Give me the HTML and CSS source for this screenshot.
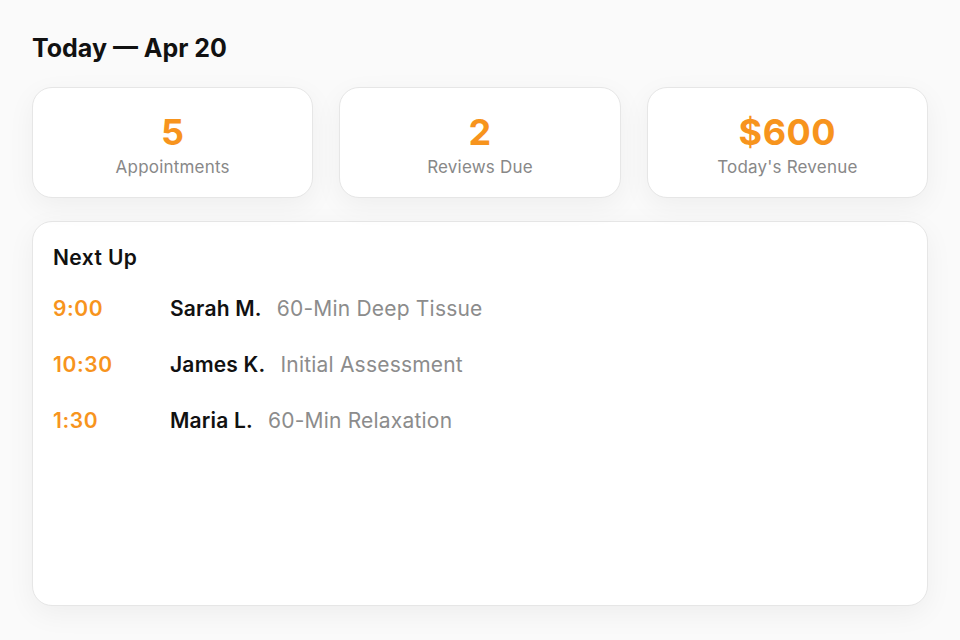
FILE: index.html
```html
<!DOCTYPE html>
<html>
<head>
<meta charset="utf-8">
<link rel="stylesheet" href="styles.css">
</head>
<body>
<main class="page">
  <h1 class="title">Today — Apr 20</h1>
  <section class="stats">
    <div class="card">
      <div class="num">5</div>
      <div class="label">Appointments</div>
    </div>
    <div class="card">
      <div class="num">2</div>
      <div class="label">Reviews Due</div>
    </div>
    <div class="card">
      <div class="num">$600</div>
      <div class="label">Today's Revenue</div>
    </div>
  </section>
  <section class="panel">
    <h2 class="panel-title">Next Up</h2>
    <ul class="list">
      <li class="row"><span class="time">9:00</span><span class="name">Sarah M.</span><span class="svc">60-Min Deep Tissue</span></li>
      <li class="row"><span class="time">10:30</span><span class="name">James K.</span><span class="svc">Initial Assessment</span></li>
      <li class="row"><span class="time">1:30</span><span class="name">Maria L.</span><span class="svc">60-Min Relaxation</span></li>
    </ul>
  </section>
</main>
</body>
</html>
```

FILE: styles.css
```css
* { box-sizing: border-box; }
html, body { margin: 0; padding: 0; }
body {
  background: #fafafa;
  font-family: Inter, "Noto Sans", sans-serif;
  color: #111;
  width: 960px;
  height: 640px;
  overflow: hidden;
}
.page {
  padding: 32px 32px 0 32px;
}
.title {
  margin: 0;
  font-size: 25px;
  line-height: 32px;
  font-weight: 700;
  letter-spacing: 0;
  color: #111;
}
.stats {
  margin-top: 23px;
  display: grid;
  grid-template-columns: repeat(3, 1fr);
  gap: 26px;
}
.card, .panel {
  background: #fff;
  border: 1.5px solid #e6e6e6;
  border-radius: 20px;
  box-shadow: 0 8px 28px rgba(0,0,0,0.05);
}
.card {
  height: 111px;
  padding-top: 24px;
  text-align: center;
}
.num {
  font-size: 36px;
  line-height: 40px;
  font-weight: 700;
  letter-spacing: 0.5px;
  color: #f7941d;
}
.label {
  margin-top: 4px;
  font-size: 17px;
  line-height: 22px;
  letter-spacing: 0.2px;
  color: #888;
}
.panel {
  margin-top: 23px;
  height: 385px;
  padding: 23px 20px;
}
.panel-title {
  margin: 0;
  font-size: 21px;
  line-height: 26px;
  font-weight: 600;
  letter-spacing: 0.4px;
}
.list {
  list-style: none;
  margin: 24px 0 0 0;
  padding: 0;
  display: flex;
  flex-direction: column;
  gap: 28px;
}
.row {
  display: flex;
  align-items: baseline;
  font-size: 21px;
  line-height: 28px;
  letter-spacing: 0.2px;
}
.time {
  width: 117px;
  color: #f7941d;
  font-weight: 600;
  letter-spacing: 0.6px;
}
.name {
  font-weight: 600;
  color: #111;
  margin-right: 15px;
}
.svc {
  color: #8c8c8c;
}
```
